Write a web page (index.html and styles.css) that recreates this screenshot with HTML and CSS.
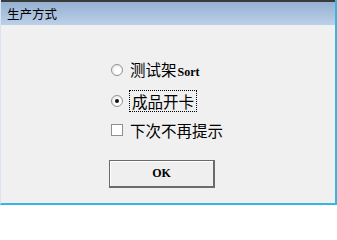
FILE: index.html
```html
<!DOCTYPE html>
<html>
<head>
<meta charset="utf-8">
<link rel="stylesheet" href="styles.css">
</head>
<body>
<div class="window">
  <div class="titlebar"><span class="title">生产方式</span></div>
  <div class="content">
    <div class="row row1">
      <span class="radio"></span>
      <span class="label">测试架<span class="latin">Sort</span></span>
    </div>
    <div class="row row2">
      <span class="radio checked"></span>
      <span class="label focus">成品开卡</span>
    </div>
    <div class="row row3">
      <span class="check"></span>
      <span class="label">下次不再提示</span>
    </div>
    <div class="btn">OK</div>
  </div>
</div>
</body>
</html>
```
FILE: styles.css
```css
html, body {
  margin: 0;
  padding: 0;
  width: 337px;
  height: 206px;
  overflow: hidden;
  background: #ffffff;
}
.window {
  box-sizing: border-box;
  width: 337px;
  height: 205px;
  display: flex;
  flex-direction: column;
  background: #f0f0f0;
  border-left: 1px solid #d9e4f0;
  border-right: 2px solid #39b5e4;
  border-bottom: 2px solid #39b5e4;
  font-family: "Noto Sans CJK SC", sans-serif;
  color: #000;
}
.titlebar {
  height: 23px;
  border-top: 2px solid #3a3a3a;
  background: linear-gradient(#95b1d2, #bcd0e8);
  display: flex;
  align-items: center;
  padding-left: 6px;
}
.title {
  font-size: 12.5px;
  line-height: 14px;
  color: #000;
}
.content {
  flex: 1;
  display: flex;
  flex-direction: column;
  padding-left: 109px;
}
.row {
  height: 22px;
  display: flex;
  align-items: center;
}
.row1 { margin-top: 34px; }
.row2 { margin-top: 9px; }
.row3 { margin-top: 7px; }
.label {
  font-size: 15.5px;
  line-height: 18px;
  margin-left: 7px;
}
.latin {
  font-family: "Liberation Serif", serif;
  font-weight: bold;
  font-size: 12px;
  margin-left: 1px;
}
.focus {
  outline: 1px dotted #000;
  outline-offset: 1px;
  margin-left: 8px;
  padding: 0 1px;
}
.radio {
  box-sizing: border-box;
  width: 12px;
  height: 12px;
  border-radius: 50%;
  border: 1px solid #939393;
  background: radial-gradient(circle at 60% 60%, #ffffff 30%, #dcdcdc 100%);
  display: flex;
  align-items: center;
  justify-content: center;
  margin-left: 1px;
}
.radio.checked::after {
  content: "";
  width: 4px;
  height: 4px;
  border-radius: 50%;
  background: #111;
}
.check {
  box-sizing: border-box;
  width: 12px;
  height: 12px;
  border: 1px solid #8f8f8f;
  background: #ffffff;
  margin-left: 1px;
}
.btn {
  box-sizing: border-box;
  margin-top: 19px;
  margin-left: -1px;
  width: 106px;
  height: 28px;
  border: 1px solid #6b6b6b;
  border-bottom-width: 2px;
  border-right-width: 2px;
  box-shadow: inset 1px 1px 0 #ffffff;
  background: #efefef;
  display: flex;
  align-items: center;
  justify-content: center;
  font-family: "Liberation Serif", serif;
  font-weight: bold;
  font-size: 12px;
}
```
